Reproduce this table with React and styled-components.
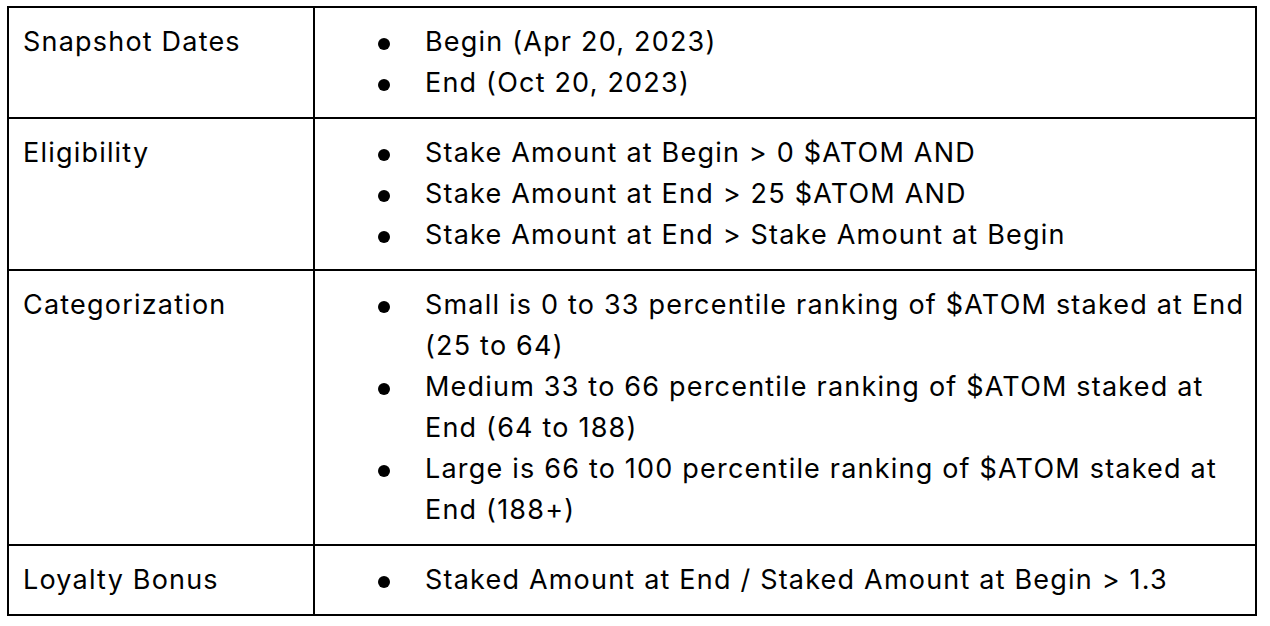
import React from "react";
import styled, { createGlobalStyle } from "styled-components";

const GlobalStyle = createGlobalStyle`
  html, body {
    margin: 0;
    padding: 0;
    background: #fff;
  }
  body {
    font-family: Inter, "Liberation Sans", sans-serif;
    color: #000;
  }
`;

const Page = styled.div`
  padding: 6px 0 0 7px;
`;

const Table = styled.div`
  width: 1250px;
  box-sizing: border-box;
  border: 2px solid #000;
`;

const Row = styled.div`
  display: grid;
  grid-template-columns: 304px 1fr;
  & + & {
    border-top: 2px solid #000;
  }
`;

const Label = styled.div`
  padding: 13px 14px 14px;
  font-size: 27px;
  line-height: 41px;
  letter-spacing: 1.2px;
`;

const Cell = styled.div`
  border-left: 2px solid #000;
  padding: 13px 6px 14px 0;
`;

const List = styled.ul`
  list-style: none;
  margin: 0;
  padding: 0;
`;

const Item = styled.li`
  display: flex;
  font-size: 27px;
  line-height: 41px;
  letter-spacing: 1.2px;
`;

const Bullet = styled.span`
  flex: 0 0 110px;
  display: flex;
  align-items: center;
  height: 41px;
  padding-top: 4px;
  box-sizing: border-box;
  &::before {
    content: "";
    width: 12px;
    height: 12px;
    margin-left: 63px;
    border-radius: 50%;
    background: #000;
  }
`;

const rows = [
  {
    label: "Snapshot Dates",
    items: ["Begin (Apr 20, 2023)", "End (Oct 20, 2023)"],
  },
  {
    label: "Eligibility",
    items: [
      "Stake Amount at Begin > 0 $ATOM AND",
      "Stake Amount at End > 25 $ATOM AND",
      "Stake Amount at End > Stake Amount at Begin",
    ],
  },
  {
    label: "Categorization",
    items: [
      "Small is 0 to 33 percentile ranking of $ATOM staked at End (25 to 64)",
      "Medium 33 to 66 percentile ranking of $ATOM staked at End (64 to 188)",
      "Large is 66 to 100 percentile ranking of $ATOM staked at End (188+)",
    ],
  },
  {
    label: "Loyalty Bonus",
    items: ["Staked Amount at End / Staked Amount at Begin > 1.3"],
  },
];

const App = () => (
  <>
    <GlobalStyle />
    <Page>
      <Table>
        {rows.map((r) => (
          <Row key={r.label}>
            <Label>{r.label}</Label>
            <Cell>
              <List>
                {r.items.map((it, i) => (
                  <Item key={i}>
                    <Bullet />
                    <span>{it}</span>
                  </Item>
                ))}
              </List>
            </Cell>
          </Row>
        ))}
      </Table>
    </Page>
  </>
);

export default App;
